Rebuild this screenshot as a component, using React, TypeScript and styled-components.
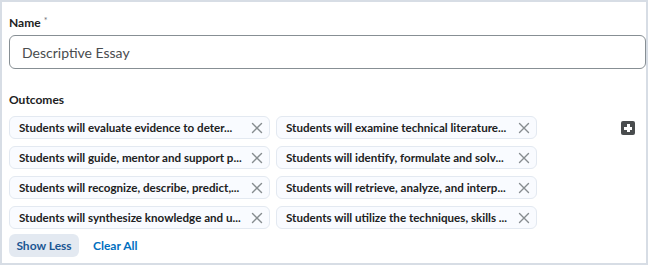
import React from "react";
import styled, { createGlobalStyle } from "styled-components";

const Global = createGlobalStyle`
  html, body { margin: 0; padding: 0; background: #fff; }
  body { font-family: Lato, "Noto Sans", sans-serif; }
  * { box-sizing: border-box; }
`;

const Frame = styled.div`
  width: 648px;
  height: 265px;
  border: 2px solid #d7dde5;
  background: #fff;
  padding: 11px 1px 0 7px;
  display: flex;
  flex-direction: column;
`;

const Label = styled.div`
  font-size: 12px;
  font-weight: 700;
  line-height: 16px;
  height: 16px;
  color: #202122;
`;

const Req = styled.span`
  font-size: 9px;
  font-weight: 400;
  color: #6e7477;
  margin-left: 3px;
  vertical-align: 3px;
`;

const Input = styled.input`
  display: block;
  margin: 6px 0 0 0;
  width: 637px;
  height: 34px;
  border: 1px solid #878f94;
  border-radius: 6px;
  padding: 0 12px;
  font-family: Lato, "Noto Sans", sans-serif;
  font-size: 14px;
  color: #494c4e;
  background: #fff;
  outline: none;
`;

const Section = styled.div`
  margin-top: 23px;
`;

const ChipsRow = styled.div`
  margin-top: 8px;
  display: flex;
  align-items: flex-start;
`;

const ChipGrid = styled.div`
  display: grid;
  grid-template-columns: 261px 261px;
  column-gap: 6px;
  row-gap: 7px;
`;

const Chip = styled.div`
  height: 23px;
  border: 1px solid #e3e9f1;
  background: #f9fbff;
  border-radius: 6px;
  display: flex;
  align-items: center;
  padding: 0 4px 0 9px;
`;

const ChipText = styled.span`
  flex: 1;
  min-width: 0;
  font-size: 11.6px;
  font-weight: 700;
  line-height: 16px;
  color: #202122;
  white-space: nowrap;
  overflow: hidden;
`;

const ChipClose = styled.button`
  flex: none;
  width: 16px;
  height: 16px;
  margin-left: 2px;
  padding: 0;
  border: none;
  background: transparent;
  display: flex;
  align-items: center;
  justify-content: center;
  cursor: pointer;
`;

const AddButton = styled.button`
  margin-left: auto;
  margin-right: 10px;
  margin-top: 5px;
  width: 14px;
  height: 14px;
  padding: 0;
  border: none;
  border-radius: 2px;
  background: #494c4e;
  position: relative;
  cursor: pointer;
  &::before, &::after {
    content: "";
    position: absolute;
    background: #fff;
  }
  &::before { left: 6px; top: 3px; width: 3px; height: 8px; }
  &::after { left: 3px; top: 6px; width: 8px; height: 3px; }
`;

const Actions = styled.div`
  margin-top: 5px;
  display: flex;
  align-items: center;
  gap: 14px;
`;

const ShowLess = styled.button`
  width: 70px;
  height: 23px;
  border: none;
  border-radius: 6px;
  background: #e3e9f1;
  color: #1b5693;
  font-family: Lato, "Noto Sans", sans-serif;
  font-size: 12px;
  font-weight: 700;
  padding: 0;
  cursor: pointer;
`;

const LinkButton = styled.button`
  border: none;
  background: transparent;
  padding: 0;
  color: #006fbf;
  font-family: Lato, "Noto Sans", sans-serif;
  font-size: 12px;
  font-weight: 700;
  cursor: pointer;
`;

const outcomes = [
  "Students will evaluate evidence to deter...",
  "Students will examine technical literature...",
  "Students will guide, mentor and support p...",
  "Students will identify, formulate and solv...",
  "Students will recognize, describe, predict,...",
  "Students will retrieve, analyze, and interp...",
  "Students will synthesize knowledge and u...",
  "Students will utilize the techniques, skills ...",
];

const XIcon = () => (
  <svg width="12" height="12" viewBox="0 0 12 12">
    <path d="M1.5 1.5 L10.5 10.5 M10.5 1.5 L1.5 10.5" stroke="#868c8f" strokeWidth="1.4" strokeLinecap="round" />
  </svg>
);

export default function App() {
  return (
    <>
      <Global />
      <Frame>
        <Label>
          Name<Req>*</Req>
        </Label>
        <Input defaultValue="Descriptive Essay" />
        <Section>
          <Label>Outcomes</Label>
          <ChipsRow>
            <ChipGrid>
              {outcomes.map((o) => (
                <Chip key={o}>
                  <ChipText>{o}</ChipText>
                  <ChipClose aria-label="Remove">
                    <XIcon />
                  </ChipClose>
                </Chip>
              ))}
            </ChipGrid>
            <AddButton aria-label="Add outcome" />
          </ChipsRow>
          <Actions>
            <ShowLess>Show Less</ShowLess>
            <LinkButton>Clear All</LinkButton>
          </Actions>
        </Section>
      </Frame>
    </>
  );
}
